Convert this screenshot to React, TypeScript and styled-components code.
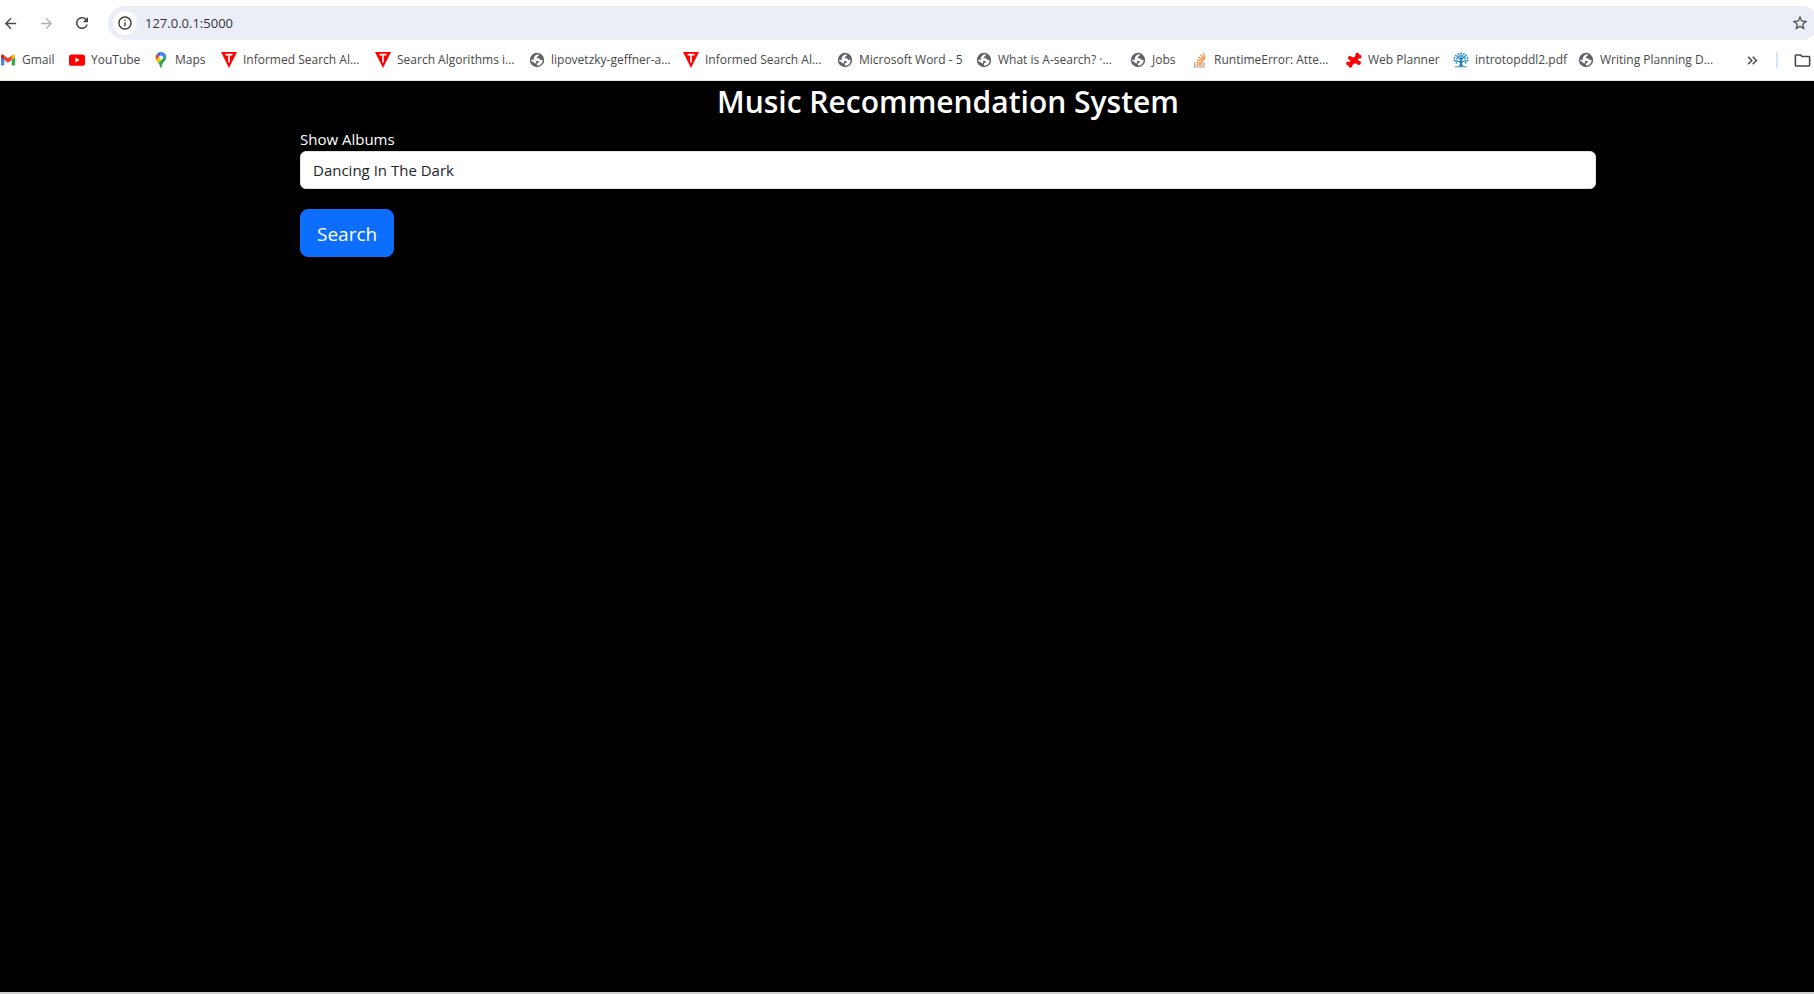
import React, { useState } from "react";
import styled, { createGlobalStyle } from "styled-components";
import {
  MdArrowBack,
  MdArrowForward,
  MdInfoOutline,
  MdKeyboardDoubleArrowRight,
  MdOutlineFolder,
  MdRefresh,
  MdStarBorder,
} from "react-icons/md";

const GlobalStyle = createGlobalStyle`
  *, *::before, *::after { box-sizing: border-box; }
  html, body, #root { height: 100%; margin: 0; }
  body {
    background: #000;
    font-family: "Segoe UI", "Open Sans", "Noto Sans", sans-serif;
    overflow: hidden;
  }
`;

const Window = styled.div`
  display: flex;
  flex-direction: column;
  height: 100%;
  overflow: hidden;
`;

const Chrome = styled.header`
  background: #fff;
  border-bottom: 1px solid #dde3de;
  overflow: hidden;
`;

const Toolbar = styled.div`
  display: flex;
  align-items: center;
  padding-top: 6px;
`;

const NavButtons = styled.nav`
  display: flex;
  gap: 16px;
  width: 108px;
`;

const IconButton = styled.button<{ $muted?: boolean }>`
  display: flex;
  align-items: center;
  justify-content: center;
  flex: none;
  width: 20px;
  height: 20px;
  padding: 0;
  border: 0;
  background: none;
  color: ${(p) => (p.$muted ? "#b4b4b4" : "#474747")};
`;

const AddressBar = styled.div`
  display: flex;
  align-items: center;
  flex: 1;
  height: 34px;
  margin-right: -5px;
  padding: 0 9px 0 5px;
  border-radius: 17px;
  background: #ebeef7;
`;

const SiteInfo = styled(IconButton)`
  width: 24px;
  height: 24px;
  border-radius: 50%;
  background: #fff;
  color: #333;
`;

const Address = styled.input`
  flex: 1;
  min-width: 0;
  padding: 0 8px;
  border: 0;
  outline: 0;
  background: none;
  color: #333;
  font: 13px/20px "Segoe UI", "Open Sans", sans-serif;
`;

const BookmarkBar = styled.div`
  display: flex;
  align-items: center;
  height: 40px;
  padding-right: 2px;
`;

const BookmarkList = styled.ul`
  display: flex;
  flex: 1;
  min-width: 0;
  margin: 0;
  padding: 0;
  list-style: none;
  overflow: hidden;
`;

const BookmarkItem = styled.li<{ $width: number }>`
  flex: none;
  width: ${(p) => p.$width}px;
`;

const BookmarkLink = styled.a`
  display: flex;
  align-items: center;
  gap: 6px;
  color: #474747;
  font-size: 12px;
  line-height: 16px;
  text-decoration: none;
  white-space: nowrap;

  svg { flex: none; }
`;

const BookmarkTools = styled.div`
  display: flex;
  align-items: center;
  gap: 14px;
`;

const Divider = styled.span`
  width: 2px;
  height: 16px;
  background: #d3e3fd;
`;

const Page = styled.main`
  flex: 1;
  padding: 0 218px 0 300px;
  border-bottom: 2px solid #d0cece;
  background: #000;
  color: #fff;
`;

const Title = styled.h1`
  margin: 0 0 4px;
  font-size: 30px;
  font-weight: 600;
  line-height: 42px;
  text-align: center;
`;

const SearchForm = styled.form`
  display: flex;
  flex-direction: column;
  align-items: flex-start;
`;

const Label = styled.label`
  font-size: 15px;
  line-height: 24px;
`;

const TextField = styled.input`
  width: 100%;
  height: 38px;
  margin-bottom: 20px;
  padding: 0 12px;
  border: 1px solid #dee2e6;
  border-radius: 6px;
  outline: 0;
  background: #fff;
  color: #212529;
  font: 15px/24px "Segoe UI", "Open Sans", sans-serif;
`;

const SubmitButton = styled.button`
  padding: 9px 16px 7px;
  border: 1px solid #0d6efd;
  border-radius: 8px;
  background: #0d6efd;
  color: #fff;
  font: 19px/30px "Segoe UI", "Open Sans", sans-serif;
`;

const GmailIcon = () => (
  <svg width="16" height="16" viewBox="0 0 16 16" aria-hidden="true">
    <path d="M1 4.2v8.2c0 .6.4 1 1 1h2.3V7z" fill="#4285f4" />
    <path d="M11.7 13.4H14c.6 0 1-.4 1-1V4.2L11.7 7z" fill="#34a853" />
    <path d="M11.7 3.6V8L15 5.500V4.200c0-1.400-1.600-2.100-2.600-1.300z" fill="#fbbc04" />
    <path d="M4.300 8V3.500L8 6.300l3.700-2.800V8L8 10.800z" fill="#ea4335" />
    <path d="M1 4.200v1.300L4.300 8V3.500l-.7-.6C2.600 2.100 1 2.800 1 4.200z" fill="#c5221f" />
  </svg>
);

const YouTubeIcon = () => (
  <svg width="16" height="16" viewBox="0 0 16 16" aria-hidden="true">
    <rect y="2.500" width="16" height="11.300" rx="2.600" fill="#f00" />
    <path d="M6.400 5.700v4.800l4.200-2.400z" fill="#fff" />
  </svg>
);

const MapsIcon = () => (
  <svg width="16" height="16" viewBox="0 0 16 16" aria-hidden="true">
    <path d="M8 0a5.400 5.400 0 0 0-4.200 2l3 2.600z" fill="#1a73e8" />
    <path d="M3.800 2a5.500 5.500 0 0 0-.6 6l3.600-3.600z" fill="#ea4335" />
    <path d="M8 0c2.300 0 4.300 1.400 5 3.500L9.600 7 6.300 4.300z" fill="#4285f4" />
    <path d="M3.100 7.800c.5 1.200 1.300 2.100 2.100 3.200l4.500-5-3-1.900z" fill="#fbbc04" />
    <path d="M13 3.500c1 3.800-1.600 5.400-3 7.500-1 1.500-1.100 4.900-2 4.900s-1-2.700-2.100-4.200L5.200 11z" fill="#34a853" />
    <circle cx="8" cy="5.500" r="2" fill="#fff" />
  </svg>
);

const TriangleIcon = () => (
  <svg width="16" height="16" viewBox="0 0 16 16" aria-hidden="true">
    <path d="M0 0h16L8 16z" fill="#f00" />
    <path d="M4.500 2.600h7M8 2.600v7.800" stroke="#fff" strokeWidth="1.600" fill="none" />
  </svg>
);

const GlobeIcon = () => (
  <svg width="16" height="16" viewBox="0 0 16 16" aria-hidden="true">
    <circle cx="8" cy="8" r="7.200" fill="#5f6368" />
    <g fill="#fff">
      <path d="M10.300 2.600c-.2 1.300-1.700 1-1.900 2.200-.1.800-.9.700-1.100 1.500h2.200c.9 0 1.200.7 1.200 1.300.8.300 1.700.4 2.900.1.200 2.500-1.300 4.700-3.300 5.500-.6.200-1.900.6-2.400.4v-1.500c0-.8.500-1.200 1.300-1.300.7-.2.900-.8.500-1.400-.3-.6-1.100-.4-1.900-.5-1.200 0-2.500-.4-2.900-1.500C4.400 5.500 6.300 3 8 2.600z" />
      <path d="M2.200 7.800h3l2.300 2.100-1 1.500-1.700-.6-.8-1.300H2.400z" />
    </g>
  </svg>
);

const StackIcon = () => (
  <svg width="16" height="16" viewBox="0 0 16 16" aria-hidden="true">
    <path d="M2.500 10v5h9.500v-5" fill="none" stroke="#a0a5a8" strokeWidth="1.200" />
    <g stroke="#f48024" strokeWidth="1.200">
      <path d="M4.200 13h6.300" />
      <path d="M4.300 10.600l6.300.8" />
      <path d="M4.800 7.800l6.100 2" />
      <path d="M6.100 4.900l5.300 3.600" />
      <path d="M8.500 2.700l3.700 4.900" />
      <path d="M11.500 1.200l1.300 5.600" />
    </g>
  </svg>
);

const PuzzleIcon = () => (
  <svg width="16" height="16" viewBox="0 0 16 16" aria-hidden="true">
    <g fill="#f00">
      <path d="M5.500 5.500L11.500 3l1.500 2-1.500 6-6.500 2.500L3 11z" />
      <circle cx="11.300" cy="2.700" r="2" />
      <circle cx="13.500" cy="4.700" r="2" />
      <circle cx="4" cy="6" r="2.100" />
      <circle cx="12.700" cy="10.800" r="2.200" />
      <circle cx="2.300" cy="11.500" r="2.100" />
      <circle cx="4.400" cy="13.600" r="2.100" />
    </g>
    <g fill="#fff">
      <circle cx="7.600" cy="3.800" r="1.500" />
      <circle cx="13" cy="7.700" r="1.100" />
      <circle cx="3.200" cy="9" r=".9" />
      <circle cx="8.800" cy="13.200" r="1.700" />
    </g>
  </svg>
);

const TreeIcon = () => (
  <svg width="16" height="16" viewBox="0 0 16 16" aria-hidden="true">
    <path d="M7.200 7h1.600l.3 5.500 1.700 2.300H5.200l1.700-2.300z" fill="#1c7fb8" />
    <g fill="none" stroke="#1c7fb8" strokeWidth="1.300" strokeLinecap="round">
      <path d="M8 11.300C6.500 9 4.500 9.200 2.600 8.600M8 11.300c1.500-2.300 3.500-2.100 5.400-2.700M8 8.500C7 6.300 5.200 5.800 4 4M8 8.500c1-2.200 2.800-2.700 4-4.500M8 7V3" />
    </g>
    <g fill="#3c97c9">
      <circle cx="8" cy="1.500" r="1.100" /><circle cx="5.200" cy="1.900" r="1" />
      <circle cx="10.800" cy="1.900" r="1" /><circle cx="2.900" cy="3.400" r="1" />
      <circle cx="13.100" cy="3.400" r="1" /><circle cx="1.500" cy="5.900" r="1" />
      <circle cx="14.500" cy="5.900" r="1" /><circle cx="1.400" cy="8.600" r="1" />
      <circle cx="14.600" cy="8.600" r="1" /><circle cx="3.400" cy="10.800" r="1" />
      <circle cx="12.600" cy="10.800" r="1" /><circle cx="4" cy="6.500" r="1" />
      <circle cx="12" cy="6.500" r="1" /><circle cx="6.300" cy="4" r=".9" />
      <circle cx="9.700" cy="4" r=".9" />
      <path d="M2 14.300h12v1H2z" />
    </g>
  </svg>
);

interface Bookmark {
  label: string;
  icon: React.FC;
  width: number;
}

const bookmarks: Bookmark[] = [
  { label: "Gmail", icon: GmailIcon, width: 69 },
  { label: "YouTube", icon: YouTubeIcon, width: 84 },
  { label: "Maps", icon: MapsIcon, width: 68 },
  { label: "Informed Search Al...", icon: TriangleIcon, width: 154 },
  { label: "Search Algorithms i...", icon: TriangleIcon, width: 154 },
  { label: "lipovetzky-geffner-a...", icon: GlobeIcon, width: 154 },
  { label: "Informed Search Al...", icon: TriangleIcon, width: 154 },
  { label: "Microsoft Word - 5", icon: GlobeIcon, width: 139 },
  { label: "What is A-search? ·...", icon: GlobeIcon, width: 154 },
  { label: "Jobs", icon: GlobeIcon, width: 62 },
  { label: "RuntimeError: Atte...", icon: StackIcon, width: 154 },
  { label: "Web Planner", icon: PuzzleIcon, width: 107 },
  { label: "introtopddl2.pdf", icon: TreeIcon, width: 125 },
  { label: "Writing Planning D...", icon: GlobeIcon, width: 154 },
];

export default function App() {
  const [url, setUrl] = useState("127.0.0.1:5000");
  const [query, setQuery] = useState("Dancing In The Dark");

  return (
    <Window>
      <GlobalStyle />
      <Chrome>
        <Toolbar>
          <NavButtons aria-label="History">
            <IconButton type="button" aria-label="Back"><MdArrowBack size={17} /></IconButton>
            <IconButton type="button" aria-label="Forward" $muted><MdArrowForward size={17} /></IconButton>
            <IconButton type="button" aria-label="Reload"><MdRefresh size={18} /></IconButton>
          </NavButtons>
          <AddressBar>
            <SiteInfo type="button" aria-label="Site information"><MdInfoOutline size={16} /></SiteInfo>
            <Address aria-label="Address" value={url} onChange={(e) => setUrl(e.target.value)} />
            <IconButton type="button" aria-label="Bookmark this page"><MdStarBorder size={18} /></IconButton>
          </AddressBar>
        </Toolbar>
        <BookmarkBar>
          <BookmarkList>
            {bookmarks.map(({ label, icon: Icon, width }, i) => (
              <BookmarkItem key={i} $width={width}>
                <BookmarkLink href="#"><Icon />{label}</BookmarkLink>
              </BookmarkItem>
            ))}
          </BookmarkList>
          <BookmarkTools>
            <IconButton type="button" aria-label="More bookmarks"><MdKeyboardDoubleArrowRight size={17} /></IconButton>
            <Divider />
            <IconButton type="button" aria-label="All bookmarks"><MdOutlineFolder size={19} /></IconButton>
          </BookmarkTools>
        </BookmarkBar>
      </Chrome>
      <Page>
        <Title>Music Recommendation System</Title>
        <SearchForm onSubmit={(e) => e.preventDefault()}>
          <Label htmlFor="album">Show Albums</Label>
          <TextField id="album" value={query} onChange={(e) => setQuery(e.target.value)} />
          <SubmitButton type="submit">Search</SubmitButton>
        </SearchForm>
      </Page>
    </Window>
  );
}
